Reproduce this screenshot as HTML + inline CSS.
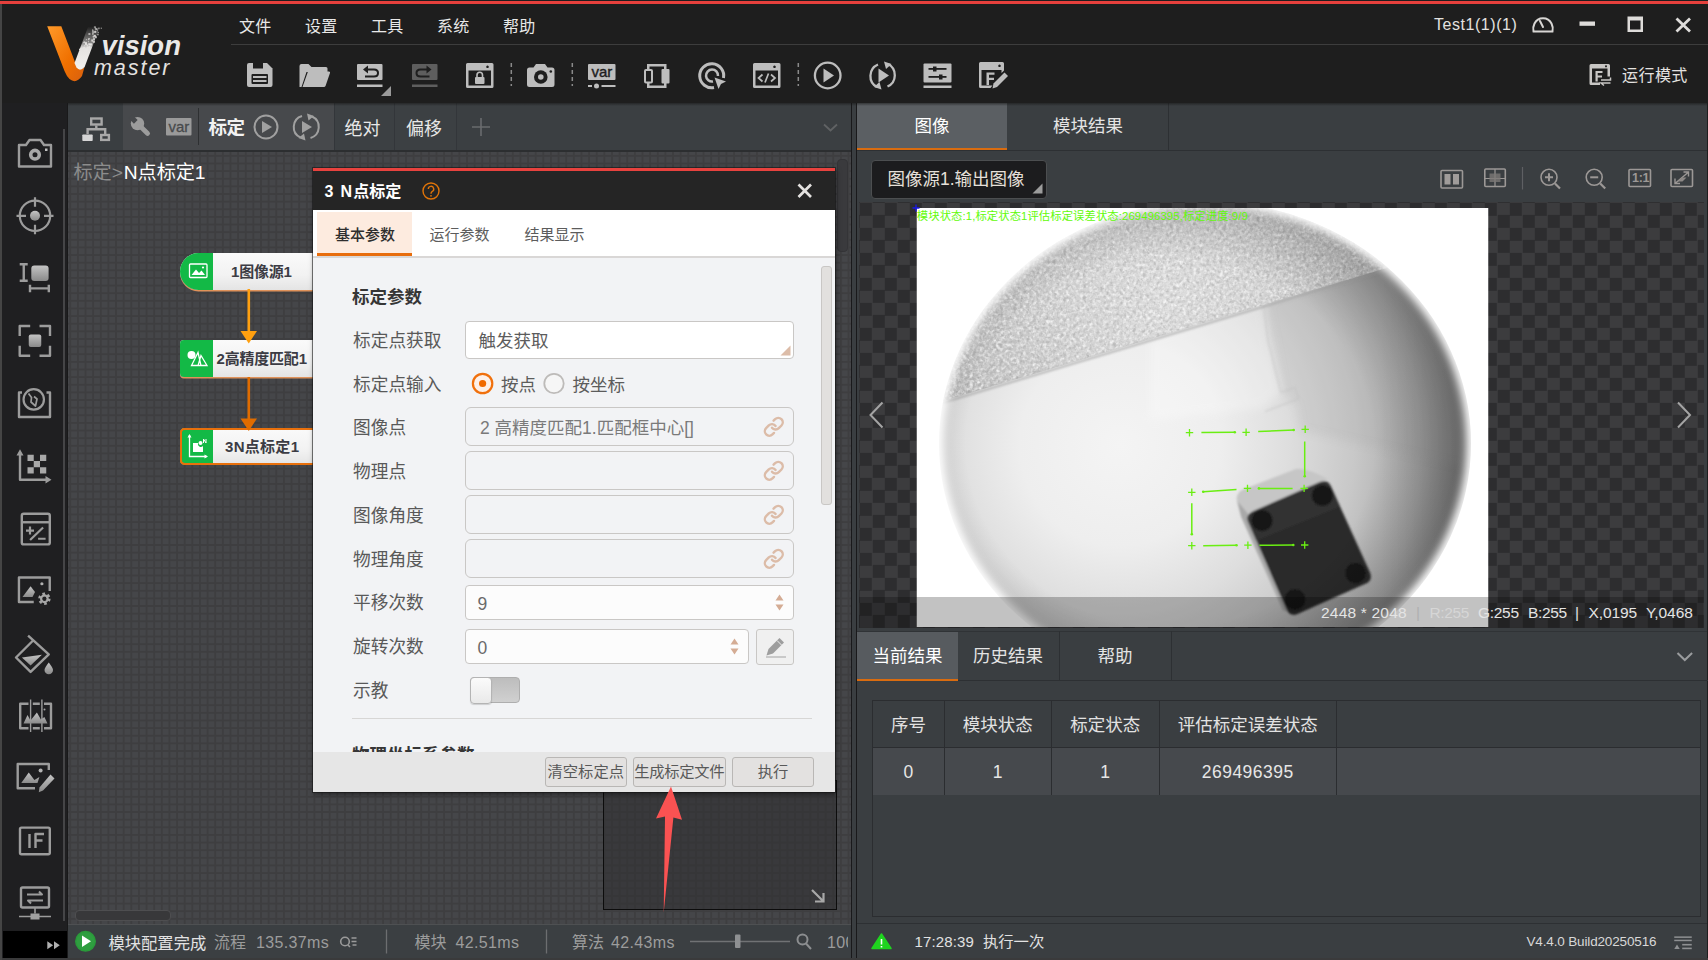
<!DOCTYPE html>
<html lang="zh-CN">
<head>
<meta charset="utf-8">
<title>VisionMaster</title>
<style>
*{box-sizing:border-box;margin:0;padding:0}
html,body{width:1708px;height:960px;overflow:hidden;background:#1e1e1e}
body{font-family:"Liberation Sans","Noto Sans CJK SC",sans-serif;color:#e6e6e6;position:relative;font-size:16px}
.abs{position:absolute}
.t{position:absolute;white-space:nowrap;line-height:1}
svg{position:absolute;overflow:visible}
/* ===== header ===== */
#redline{left:0;top:1px;width:1708px;height:3px;background:#e6403c}
#leftedge{display:none}
#hdr{left:1px;top:4px;width:1707px;height:99px;background:#1e1e1e}
#hsep{left:231px;top:44px;width:1477px;height:1px;background:#3d3d3d}
.menu{top:19.200px;font-size:16px;color:#e8e8e8;letter-spacing:.3px}
/* ===== sidebar ===== */
#side{left:1px;top:103px;width:66px;height:857px;background:#1f1f21}
#sidescroll{left:62.700px;top:128.500px;width:2.800px;height:792px;background:#454547}
#sidebtm{left:3px;top:931px;width:64.500px;height:27.500px;background:#000}
#vsplit1{left:67px;top:103px;width:2px;height:857px;background:#19191a}
/* ===== flow panel ===== */
#flowtabs{left:68px;top:103px;width:783px;height:47px;background:#3b3f42}
#flowtabline{left:68px;top:150px;width:783px;height:2px;background:#2c2e30}
#canvas{left:68px;top:152px;width:783px;height:772px;background:#3e3e40;overflow:hidden}
#fstatus{left:68px;top:924px;width:783px;height:35px;background:#3b3f42}
#vsplit2{left:851px;top:103px;width:6px;height:857px;background:#3a3e41;border-left:1.300px solid #19191b;border-right:1.300px solid #19191b}
/* ===== right panel ===== */
#rp{left:857px;top:103px;width:850px;height:857px;background:#3a3e41}
</style>
</head>
<body>
<div class="abs" id="hdr"></div>
<div class="abs" id="redline"></div>
<div class="abs" id="leftedge"></div>
<div class="abs" id="hsep"></div>
<div class="t menu" style="left:239px">文件</div>
<div class="t menu" style="left:305px">设置</div>
<div class="t menu" style="left:371px">工具</div>
<div class="t menu" style="left:437px">系统</div>
<div class="t menu" style="left:503px">帮助</div>
<!-- logo -->
<svg style="left:0;top:0" width="240" height="103" viewBox="0 0 240 103">
<defs>
<linearGradient id="lgo" x1="0" y1="0" x2="1" y2="1"><stop offset="0" stop-color="#ff9a2a"/><stop offset=".6" stop-color="#f07000"/><stop offset="1" stop-color="#d86010"/></linearGradient>
<linearGradient id="lgw" x1="0" y1="1" x2="0" y2="0"><stop offset="0" stop-color="#f4f2f0"/><stop offset=".5" stop-color="#e4e2e0"/><stop offset=".62" stop-color="#e0dedc" stop-opacity=".55"/><stop offset="1" stop-color="#e0dedc" stop-opacity="0"/></linearGradient>
</defs>
<path d="M47.2 26.3 L61.3 26.3 L76.5 66 Q79.5 72 84.5 67 L82 76 Q76 84.5 69.5 79 Q66.5 76 64.5 71 Z" fill="url(#lgo)"/>
<path d="M74.5 63 L88 27 L100 26.5 L84.6 67 Q80 72 76.5 67.5 Z" fill="url(#lgw)"/>
<g fill="#e8e6e4"><rect x="93.3" y="36.6" width="1.0" height="1.0" opacity="0.67"/><rect x="97.0" y="30.3" width="1.0" height="1.0" opacity="0.57"/><rect x="92.0" y="29.3" width="1.3" height="1.3" opacity="0.54"/><rect x="83.8" y="41.4" width="1.3" height="1.3" opacity="0.78"/><rect x="85.0" y="41.9" width="2.0" height="2.0" opacity="0.77"/><rect x="86.6" y="46.4" width="2.0" height="2.0" opacity="0.88"/><rect x="79.0" y="48.7" width="1.3" height="1.3" opacity="0.89"/><rect x="97.6" y="31.8" width="1.3" height="1.3" opacity="0.60"/><rect x="90.1" y="44.1" width="1.3" height="1.3" opacity="0.82"/><rect x="88.5" y="46.0" width="2.0" height="2.0" opacity="0.87"/><rect x="84.9" y="43.2" width="1.3" height="1.3" opacity="0.82"/><rect x="84.1" y="45.3" width="1.0" height="1.0" opacity="0.83"/><rect x="92.6" y="35.8" width="1.6" height="1.6" opacity="0.68"/><rect x="94.0" y="31.0" width="2.0" height="2.0" opacity="0.58"/><rect x="85.9" y="39.2" width="1.0" height="1.0" opacity="0.74"/><rect x="94.9" y="28.0" width="2.0" height="2.0" opacity="0.52"/><rect x="87.9" y="41.2" width="1.0" height="1.0" opacity="0.79"/><rect x="93.6" y="34.9" width="1.0" height="1.0" opacity="0.63"/><rect x="97.1" y="33.7" width="1.6" height="1.6" opacity="0.61"/><rect x="93.0" y="38.2" width="2.0" height="2.0" opacity="0.72"/><rect x="85.4" y="49.0" width="1.6" height="1.6" opacity="0.90"/><rect x="86.1" y="49.3" width="1.6" height="1.6" opacity="0.93"/><rect x="88.2" y="38.0" width="1.6" height="1.6" opacity="0.72"/><rect x="96.2" y="28.4" width="1.6" height="1.6" opacity="0.53"/><rect x="88.9" y="43.9" width="1.6" height="1.6" opacity="0.81"/><rect x="93.9" y="26.2" width="2.0" height="2.0" opacity="0.50"/><rect x="84.2" y="49.9" width="1.6" height="1.6" opacity="0.94"/><rect x="87.9" y="39.2" width="1.0" height="1.0" opacity="0.74"/><rect x="92.4" y="31.2" width="1.3" height="1.3" opacity="0.59"/><rect x="93.9" y="35.1" width="2.0" height="2.0" opacity="0.67"/><rect x="83.3" y="41.9" width="1.3" height="1.3" opacity="0.78"/><rect x="93.0" y="40.8" width="2.0" height="2.0" opacity="0.75"/><rect x="98.1" y="27.6" width="1.6" height="1.6" opacity="0.52"/><rect x="85.1" y="43.3" width="2.0" height="2.0" opacity="0.82"/><rect x="94.5" y="30.6" width="2.0" height="2.0" opacity="0.58"/><rect x="92.1" y="30.2" width="1.6" height="1.6" opacity="0.56"/><rect x="85.1" y="49.2" width="1.0" height="1.0" opacity="0.92"/><rect x="92.0" y="33.2" width="1.6" height="1.6" opacity="0.61"/><rect x="92.3" y="31.9" width="1.6" height="1.6" opacity="0.57"/><rect x="94.9" y="27.4" width="1.0" height="1.0" opacity="0.52"/><rect x="91.3" y="39.3" width="1.6" height="1.6" opacity="0.74"/><rect x="91.5" y="40.2" width="1.6" height="1.6" opacity="0.74"/><rect x="88.2" y="43.1" width="2.0" height="2.0" opacity="0.79"/><rect x="90.0" y="43.3" width="2.0" height="2.0" opacity="0.79"/><rect x="100.7" y="27.6" width="1.3" height="1.3" opacity="0.51"/><rect x="83.3" y="46.9" width="1.6" height="1.6" opacity="0.86"/><rect x="94.2" y="34.9" width="1.3" height="1.3" opacity="0.64"/><rect x="95.0" y="36.2" width="2.0" height="2.0" opacity="0.67"/><rect x="86.7" y="44.5" width="1.6" height="1.6" opacity="0.81"/><rect x="88.4" y="33.0" width="2.0" height="2.0" opacity="0.63"/></g>
<text x="101.5" y="55" font-family="'Liberation Sans',sans-serif" font-weight="700" font-style="italic" font-size="27.5" fill="#ebe9e7">vision</text>
<text x="94" y="75" font-family="'Liberation Sans',sans-serif" font-style="italic" font-size="21.5" letter-spacing="1.95" fill="#e4e2e0">master</text>
</svg>
<!-- toolbar icons -->
<svg style="left:0;top:0" width="1708" height="103" viewBox="0 0 1708 103" fill="#bdbdbd">
<!-- save -->
<path d="M247 65 q0-2 2-2 h18 l5.5 5.5 v16.5 q0 2-2 2 h-21.500 q-2 0-2-2z" />
<rect x="253" y="63" width="10" height="5.500" fill="#1e1e1e"/><rect x="251.500" y="74" width="16.500" height="10" rx="1" fill="#1e1e1e"/>
<rect x="253" y="76" width="13.500" height="2" /><rect x="253" y="80" width="13.500" height="2"/>
<!-- open -->
<path d="M299.500 87 v-21 q0-2 2-2 h7 l3 3 h14.500 q1.500 0 1.500 1.500 v3.500 h-21 l-5 15z"/>
<path d="M308 71.500 h21 q1.500 0 1 1.500 l-4.500 13 q-.5 1-1.500 1 h-21.500z"/>
<!-- undo -->
<rect x="357" y="64" width="25.500" height="16" rx="1"/>
<path d="M363 69.500 l5-4 v3 h6 q5 0 5 4.500 t-5 4.500 h-9 v-2 h9 q3 0 3-2.500 t-3-2.500 h-6 v3z" fill="#1e1e1e"/>
<rect x="357" y="84.500" width="25.500" height="2.500"/>
<path d="M391 86 v10 h-10z" fill="#9a9a9a"/>
<!-- redo -->
<g fill="#5e5e5e"><rect x="412" y="64" width="25.500" height="16" rx="1"/><rect x="412" y="84.500" width="25.500" height="2.500"/></g>
<path d="M431.500 69.500 l-5-4 v3 h-6 q-5 0-5 4.500 t5 4.500 h9 v-2 h-9 q-3 0-3-2.500 t3-2.500 h6 v3z" fill="#1e1e1e"/>
<!-- lock window -->
<path d="M466 64.500 q0-1.500 1.500-1.500 h24.500 q1.500 0 1.500 1.500 v22 q0 1.500-1.500 1.500 h-24.500 q-1.500 0-1.500-1.500z M468.500 70.500 v15 h22.500 v-15z M487.500 65.500 a1.300 1.300 0 1 0 .01 0z" fill-rule="evenodd"/>
<rect x="475" y="77" width="9.500" height="7" rx="1"/><path d="M477 77 v-2 a2.750 2.750 0 0 1 5.500 0 v2" fill="none" stroke="#bdbdbd" stroke-width="1.600"/>
<!-- dashes -->
<g stroke="#8a8a8a" stroke-width="1.500" stroke-dasharray="4 3" fill="none"><path d="M511.300 63 v23"/><path d="M572.300 63 v23"/><path d="M798.300 63 v23"/></g>
<!-- camera -->
<path d="M527 70 q0-2.500 2.500-2.500 h4 l2.500-3.500 h9 l2.500 3.500 h4.500 q2.500 0 2.500 2.500 v14.500 q0 2.500-2.500 2.500 h-22.500 q-2.500 0-2.500-2.500z"/>
<circle cx="540.800" cy="77" r="6.800" fill="#1e1e1e"/><circle cx="540.800" cy="77" r="2.800"/><circle cx="550.800" cy="71.500" r="1.300" fill="#1e1e1e"/>
<!-- var -->
<rect x="588" y="64" width="27.500" height="16" rx="1"/>
<text x="601.800" y="77" text-anchor="middle" font-family="'Liberation Sans',sans-serif" font-size="15" fill="#1e1e1e" stroke="#1e1e1e" stroke-width=".4">var</text>
<rect x="588" y="85" width="4" height="2"/><circle cx="596.500" cy="86" r="2.500"/><rect x="601.500" y="85" width="14" height="2"/>
<!-- module -->
<path d="M647 64 h19.500 v2.500 h-19.500z M647 85.500 h19.500 v2.500 h-19.500z M647 64 h2.500 v6 h-2.500z M664 64 h2.500 v6 h-2.500z M647 82 h2.500 v6 h-2.500z M664 82 h2.500 v6 h-2.500z"/>
<rect x="645" y="70" width="7" height="12.500" rx="1" fill="none" stroke="#bdbdbd" stroke-width="2"/><rect x="661.500" y="69" width="8" height="14.500" rx="1"/>
<!-- target click -->
<path d="M723.500 78 A12 12 0 1 0 714 87.500" fill="none" stroke="#bdbdbd" stroke-width="3"/>
<path d="M718 76 A6 6 0 1 0 713 81.500" fill="none" stroke="#bdbdbd" stroke-width="2.500"/>
<path d="M714.500 77.500 l11.500 4 l-5 2.500 l-2.500 5z"/>
<!-- code window -->
<path d="M753 64.500 q0-1.500 1.500-1.500 h24.500 q1.500 0 1.500 1.500 v22 q0 1.500-1.500 1.500 h-24.500 q-1.500 0-1.500-1.500z M755.500 70.500 v15 h22.500 v-15z M774.500 65.500 a1.300 1.300 0 1 0 .01 0z" fill-rule="evenodd"/>
<path d="M762.500 74.500 l-4 3.500 l4 3.500 M771 74.500 l4 3.500 l-4 3.500 M768.500 73.500 l-3.500 9" fill="none" stroke="#bdbdbd" stroke-width="1.700"/>
<!-- play -->
<circle cx="827.700" cy="75.500" r="12.800" fill="none" stroke="#bdbdbd" stroke-width="2.300"/><path d="M823.500 68.500 l10.500 7 l-10.500 7z"/>
<!-- loop play -->
<path d="M878 64.500 A12.500 12.500 0 0 0 877 87" fill="none" stroke="#bdbdbd" stroke-width="2.300"/>
<path d="M887.500 86.500 A12.500 12.500 0 0 0 888 64" fill="none" stroke="#bdbdbd" stroke-width="2.300"/>
<path d="M884 61.500 l7.500 2.500 l-5.500 5z M881.500 89.500 l-7.500-2.500 l5.500-5z"/>
<path d="M878.500 68.500 l10.500 7 l-10.500 7z"/>
<!-- sliders -->
<rect x="923.500" y="63.500" width="28" height="19" rx="1"/><rect x="923.500" y="85.500" width="28" height="2.500"/>
<g fill="#1e1e1e"><rect x="928.500" y="68" width="18" height="1.800"/><rect x="928.500" y="76" width="18" height="1.800"/><rect x="933" y="66.500" width="3.500" height="5"/><rect x="939" y="74.500" width="3.500" height="5"/></g>
<!-- F edit -->
<path d="M979 63.500 q0-1.500 1.500-1.500 h22 q1.500 0 1.500 1.500 v7 l-2.500 2.500 v-3 h-20 v15.500 h11 l-2 2.500 h-10 q-1.500 0-1.500-1.500z M999.500 64.500 a1.300 1.300 0 1 0 .01 0z" fill-rule="evenodd"/>
<path d="M986.500 72.500 h8 v2.200 h-5.500 v3 h5 v2.200 h-5 v5 h-2.500z"/>
<path d="M1004.500 72.500 l3.500 3.500 l-11 11 l-4.500 1.500 l1-5z"/>
<!-- window controls -->
<g fill="none" stroke="#d8d6d4" stroke-width="2">
<path d="M1533.500 31.500 h19 q1-4-1-8 a9.500 9.500 0 0 0 -17 0 q-2 4-1 8z"/><path d="M1543 27 l-3-6" stroke-linecap="round"/>
</g>
<rect x="1579.500" y="21.500" width="15.500" height="4.300" fill="#dedcda"/>
<path d="M1627.500 16.500 h15.500 v15.500 h-15.500z M1630 20.500 v9 h10.500 v-9z" fill="#dedcda" fill-rule="evenodd"/>
<path d="M1676.500 18.500 l13.500 13 M1690 18.500 l-13.500 13" stroke="#dedcda" stroke-width="2.800" fill="none"/>
<!-- run mode icon -->
<path d="M1589.500 65.500 q0-1.500 1.500-1.500 h17.500 q1.500 0 1.500 1.500 v11 h-2.500 v-8 h-15.500 v14 h8 v2.500 h-9 q-1.500 0-1.500-1.500z M1606 65.300 a1 1 0 1 0 .01 0z" fill="#c8c6c4" fill-rule="evenodd"/>
<path d="M1595.500 71 h7 v2 h-4.800 v2.500 h4.300 v2 h-4.300 v4 h-2.200z" fill="#c8c6c4"/>
<path d="M1601 80 h9.500 v-2.500 M1610.500 83 h-9.500 l3 2.500" fill="none" stroke="#c8c6c4" stroke-width="1.500"/>
</svg>
<div class="t" style="left:1434px;top:17px;font-size:16px;color:#e4e2e0;letter-spacing:.55px">Test1(1)(1)</div>
<div class="t" style="left:1622px;top:67.500px;font-size:16px;color:#e4e2e0;letter-spacing:.45px">运行模式</div>
<!--HEADER-ICONS-END-->
<div class="abs" id="side"></div>
<div class="abs" id="sidescroll"></div>
<div class="abs" id="sidebtm"></div>
<div class="abs" id="vsplit1"></div>
<svg style="left:0;top:103px" width="68" height="857" viewBox="0 103 68 857" fill="none" stroke="#9c9c9c" stroke-width="2.400" stroke-linejoin="round">
<defs><linearGradient id="sg" x1="0" y1="0" x2="0" y2="1"><stop offset="0" stop-color="#c4c4c4"/><stop offset="1" stop-color="#8a8a8a"/></linearGradient></defs>
<!-- camera -->
<path d="M19 145 h7 l3.500-5 h11 l3.500 5 h7 v21.500 h-32z"/><circle cx="35" cy="154.700" r="4.300" stroke-width="3.600" stroke="#a8a8a8"/><rect x="45" y="148.500" width="2.500" height="2.500" fill="#c0c0c0" stroke="none"/>
<!-- target -->
<circle cx="35" cy="215.800" r="15.200" stroke-width="2.200"/><circle cx="35" cy="215.800" r="5" fill="url(#sg)" stroke="none"/><path d="M35 197.300 v9.500 M35 224.800 v9.500 M16.500 215.800 h9.500 M44 215.800 h9.500" stroke-width="2.200"/>
<!-- measure -->
<rect x="31.300" y="265.500" width="17.300" height="15.500" rx="3" fill="url(#sg)" stroke="none"/><path d="M23.750 264 v17 M19.700 264.300 h8 M19.700 280.800 h8 M30 288.400 h19 M30 284.700 v7.500 M48.800 284.700 v7.500"/>
<!-- focus -->
<path d="M19.700 336 v-10 h10.500 M39.500 326 h10.500 v10 M50 345.700 v10 h-10.500 M30.200 355.700 h-10.500 v-10"/><rect x="28.750" y="334.400" width="12.500" height="12.500" rx="2" fill="url(#sg)" stroke="none"/>
<!-- globe photo -->
<path d="M22 392.500 h-3 v24.500 h31 v-24.500 h-3.500"/><circle cx="33.750" cy="399.400" r="10.200" stroke-width="2.200"/><path d="M28.500 393.500 l3 4 l-.5 4.500 l4.500 4 l1.500-7 l-3-2.500" stroke-width="1.700"/>
<!-- axes -->
<path d="M20 454 v25.750 h27" /><path d="M16.500 455.500 l3.500-6.200 l3.500 6.200z M45.500 476 l6 3.750 l-6 3.750z" fill="#9c9c9c" stroke="none"/>
<g fill="#a8a8a8" stroke="none"><rect x="27.500" y="454.750" width="6.250" height="6.250"/><rect x="40" y="454.750" width="6.250" height="6.250"/><rect x="33.750" y="461" width="6.250" height="6.250"/><rect x="27.500" y="467.250" width="6.250" height="6.250"/><rect x="40" y="467.250" width="6.250" height="6.250"/></g>
<!-- calc -->
<rect x="21.800" y="513.700" width="28" height="30.700" rx="2"/><path d="M21.800 522.250 h28"/><path d="M26 530.600 h8 M30 526.600 v8 M38.100 538.750 h7.500 M43.100 527.500 l-13 12.500" stroke-width="2.200"/>
<!-- image gear -->
<path d="M33.750 602 h-14.800 v-24.500 h30.800 v13.500"/><path d="M22.500 597 l8.100-10.750 l4.400 5.650 l-2.500 5.100z" fill="url(#sg)" stroke="none"/><circle cx="41.900" cy="583.750" r="1.600" fill="#b0b0b0" stroke="none"/>
<circle cx="44.400" cy="598.750" r="4.300" stroke-width="3.800" stroke-dasharray="2.250 2.250" stroke="#a6a6a6"/><circle cx="44.400" cy="598.750" r="3.300" stroke-width="2.200" stroke="#a6a6a6"/>
<!-- bucket -->
<path d="M28.100 635.600 L48.750 654.400 L30.600 671.900 L16 657.500 L33.100 640.500"/><path d="M21.900 657.500 l20-2.750 l-11.300 10.850z" fill="url(#sg)" stroke="none"/><path d="M48.750 662.500 q4.250 5.500 4.250 7.500 a4.250 4.250 0 0 1-8.500 0 q0-2 4.250-7.500z" fill="url(#sg)" stroke="none"/>
<!-- compare -->
<path d="M28.500 703.700 h-8.300 v24.500 h8.300 M32.800 703.700 h7 M32.800 728.200 h7 M44 703.700 h7 v24.500 h-7"/><path d="M30.600 699.400 v32.500 M41.900 699.400 v32.500" stroke-width="1.400"/><path d="M23.500 723.500 l4-8.500 l3 5.500 l6.400-8 l4 7 l3.500-2.600 l3.100 6.600z" fill="url(#sg)" stroke="none"/><circle cx="44.500" cy="709.500" r="1" fill="#a6a6a6" stroke="none"/>
<!-- image edit -->
<path d="M35 788.200 h-17.300 v-24.200 h31.100 v6"/><path d="M21.250 783.100 l7.500-10.600 l5.650 7.500 l5-3.100 l-1.900 6.200z" fill="url(#sg)" stroke="none"/><circle cx="40.600" cy="770.400" r="2" fill="#b4b4b4" stroke="none"/>
<path d="M50.500 774.500 l4 4 l-11.500 12 l-4.200 1.800 l.7-4.800z" fill="url(#sg)" stroke="none"/>
<!-- IF -->
<rect x="20" y="827.600" width="29.800" height="26.600" rx="1.500"/><path d="M29.500 834 v14 M35.500 848 v-14 h8.500 M35.500 840.500 h7" stroke-width="2.400"/>
<!-- protocol -->
<rect x="21" y="887.500" width="28" height="20" rx="1.500"/><path d="M27 894.500 h15 l-3-3 M43 900.500 h-15 l3 3" stroke-width="2"/><path d="M35 907.500 v6 M19 916.500 h32" stroke-width="1.600"/><rect x="30.500" y="913.500" width="9" height="6" fill="#a0a0a0" stroke="none"/>
<!-- >> -->
<path d="M47.300 941.200 l5.800 4 l-5.800 4z M54 941.200 l5.800 4 l-5.800 4z" fill="#b0b0b0" stroke="none"/>
</svg>
<!--SIDE-ICONS-END-->
<div class="abs" id="flowtabs"></div>
<div class="abs" id="flowtabline"></div>
<div class="abs" id="canvas"><svg style="left:0;top:0" width="783" height="772"><defs><pattern id="grid" x="3.200" y="4.800" width="7.630" height="7.630" patternUnits="userSpaceOnUse"><rect x="0" y="0" width="5.700" height="5.700" fill="#454649"/></pattern></defs><rect width="783" height="772" fill="url(#grid)"/></svg></div>
<div class="abs" id="fstatus"></div>
<style>
.ftab{position:absolute;top:103px;height:47px}
.node{position:absolute;left:180px;width:140px;height:37px;background:linear-gradient(#fafafa,#f2f2f2 60%,#e4e4e4);box-shadow:0 1.500px 0 #e0925a}
.node .g{position:absolute;left:0;top:0;width:32.500px;height:37px;background:#13b946}
.node .nt{position:absolute;top:11px;font-size:15px;font-weight:700;color:#3c3c44;white-space:nowrap;line-height:1;letter-spacing:-.2px}
.st{position:absolute;top:934.500px;font-size:16px;line-height:1;white-space:nowrap;color:#9c9c9c}
</style>
<div class="ftab" style="left:68px;width:55px;background:#3a3e41"></div>
<div class="ftab" style="left:123px;width:211px;background:#47494c"></div>
<div class="ftab" style="left:334px;width:61px;background:#3c4043;border-left:1px solid #33363a;border-right:1px solid #33363a"></div>
<div class="ftab" style="left:395px;width:62px;background:#3c4043;border-right:1px solid #33363a"></div>
<div class="abs" style="left:198px;top:108px;width:1px;height:37px;background:#2e3032"></div>
<svg style="left:68px;top:103px" width="783" height="47" viewBox="68 103 783 47">
<!-- tree -->
<g fill="none" stroke="#a8a8a8" stroke-width="2.400"><rect x="91.200" y="118.500" width="10.400" height="6"/><path d="M96.300 125.500 v3.700 M87.600 134 v-4.800 h17.600 v4.800"/><rect x="101.200" y="135" width="7.700" height="4.900"/></g><rect x="82.300" y="134.500" width="10.400" height="6.600" rx=".8" fill="#d6d6d6"/>
<!-- wrench -->
<circle cx="137.500" cy="123.600" r="6.700" fill="#9c9c9c"/><path d="M139.500 125.600 L147.600 133.400" stroke="#9c9c9c" stroke-width="4.800" stroke-linecap="round"/><rect x="-2.600" y="-9" width="5.200" height="8" fill="#47494c" transform="translate(136.500 122.600) rotate(-45)"/>
<!-- var -->
<rect x="166" y="118" width="25.500" height="17.500" rx="1" fill="#9a9a9a"/><text x="178.800" y="132" text-anchor="middle" font-family="'Liberation Sans',sans-serif" font-size="15" fill="#484a4c" stroke="#484a4c" stroke-width=".3">var</text>
<!-- play -->
<g fill="none" stroke="#a0a0a0" stroke-width="2"><circle cx="266" cy="127" r="11.500"/></g><path d="M262 121 l10 6 l-10 6z" fill="#a0a0a0"/>
<!-- loop -->
<g fill="none" stroke="#a0a0a0" stroke-width="2"><path d="M302 116 A11.500 11.500 0 0 0 300.500 137.500"/><path d="M310.500 138 A11.500 11.500 0 0 0 312 116.500"/></g>
<path d="M307 113.500 l7 2.500 l-5.500 4.500z M305.500 140.500 l-7-2.500 l5.500-4.500z M302 121 l10 6 l-10 6z" fill="#a0a0a0"/>
<!-- plus -->
<path d="M472 127 h18 M481 118 v18" stroke="#6a6c6e" stroke-width="1.600"/>
<!-- chevron -->
<path d="M824 124.500 l6.500 6 l6.500-6" fill="none" stroke="#606264" stroke-width="1.800"/>
</svg>
<div class="t" style="left:208.500px;top:119px;font-size:18.500px;font-weight:700;color:#f2f2f2;letter-spacing:-.5px">标定</div>
<div class="t" style="left:344.500px;top:119.500px;font-size:18px;color:#e8e8e8">绝对</div>
<div class="t" style="left:406px;top:119.500px;font-size:18px;color:#e8e8e8">偏移</div>
<div class="t" style="left:73.500px;top:162.500px;font-size:19.200px;color:#8c8c8c;letter-spacing:-.1px">标定&gt;<span style="color:#fff;margin-left:1px">N点标定1</span></div>
<!-- minimap -->
<div class="abs" style="left:603px;top:780px;width:234px;height:130px;background:rgba(48,48,50,.55);border:1px solid #0c0c0c"></div>
<svg style="left:810px;top:888px" width="16" height="16" viewBox="0 0 16 16"><path d="M2 2 l11 11 M5 13.500 h8.500 v-8.500" fill="none" stroke="#a8a8a8" stroke-width="2.200"/></svg>
<div class="abs" style="left:836.500px;top:158.500px;width:11px;height:93px;border:1px solid #343437;border-radius:4px;background:#3a3a3d"></div>
<!-- scrollbar h -->
<div class="abs" style="left:74.500px;top:909.500px;width:96px;height:11.500px;border:1px solid #4e4e50;border-radius:4px;background:#38383a"></div>
<!-- nodes -->
<div class="node" style="top:252.500px;border-radius:18.500px 0 0 18.500px"><div class="g" style="border-radius:18.500px 0 0 18.500px"></div><div class="nt" style="left:51px">1图像源1</div></div>
<div class="node" style="top:340px;border-radius:4px 0 0 4px"><div class="g" style="border-radius:4px 0 0 4px"></div><div class="nt" style="left:36.500px">2高精度匹配1</div></div>
<div class="node" style="top:427.500px;border-radius:5px 0 0 5px;box-shadow:inset 2px 0 0 #e8700c,inset 0 2px 0 #e8700c,inset 0 -2px 0 #e8700c;"><div class="g" style="border-radius:5px 0 0 5px;box-shadow:inset 2px 0 0 #e8700c,inset 0 2px 0 #e8700c,inset 0 -2px 0 #e8700c"></div><div class="nt" style="left:45px;letter-spacing:.3px">3N点标定1</div></div>
<svg style="left:180px;top:250px" width="34" height="216" viewBox="180 250 34 216" fill="none" stroke="#fff" stroke-width="1.300">
<rect x="189.500" y="264" width="17.500" height="13.500" rx="1"/><path d="M191.500 275 l4.500-5.500 l3 3.500 l2.500-2.500 l3.500 4.500z" fill="#fff" stroke="none"/><circle cx="203" cy="267.500" r="1.100" fill="#fff" stroke="none"/>
<circle cx="191.500" cy="355" r="4" fill="#fff" stroke="none"/><path d="M198 352.500 l-6.500 13 h9.500z M201 355.500 l-3 10 h9z"/>
<path d="M189.500 435 v21.500 h17" /><path d="M187.500 437.500 l2-3.500 l2 3.500z M204.500 454.500 l3.500 2 l-3.500 2z" fill="#fff" stroke="none"/><path d="M193 443 h5 a3 3 0 0 0 5 3 v6 h-10z" fill="#fff" stroke="none"/><circle cx="200.500" cy="443" r="2" fill="#fff" stroke="none"/><path d="M203.500 439 v4 M203.500 439 l2.500 4 v-4" stroke-width="1"/>
</svg>
<!-- arrows between nodes -->
<svg style="left:230px;top:285px" width="40" height="150" viewBox="230 285 40 150">
<path d="M248.800 289 v44" stroke="#ffa010" stroke-width="2.600"/><path d="M240.500 331 h16.500 l-8.250 12.500z" fill="#ffa010"/>
<path d="M248.800 377 v44" stroke="#e06c00" stroke-width="2.600"/><path d="M240.500 418.500 h16.500 l-8.250 12.500z" fill="#e06c00"/>
</svg>
<!-- status bar -->
<div class="abs" style="left:68px;top:923.500px;width:783px;height:1px;background:#4e5052"></div>
<svg style="left:68px;top:924px" width="783" height="35" viewBox="68 924 783 35">
<circle cx="85.500" cy="941.300" r="10.500" fill="#2a9a3a"/><circle cx="85.500" cy="941.300" r="9" fill="#2f9e40"/><path d="M82 935.500 l9 5.800 l-9 5.800z" fill="#fff"/>
<g fill="none" stroke="#9a9a9a" stroke-width="1.600"><circle cx="345" cy="941.500" r="4.300"/><path d="M348 945 l2 2 M351.500 938 h5 M351.500 941.500 h5 M352.500 945 h4"/></g>
<path d="M386.500 929.500 v24 M546.500 929.500 v24" stroke="#6c6e70" stroke-width="1.300"/>
<path d="M690 941.500 h100" stroke="#707274" stroke-width="1.300"/><rect x="735" y="934.500" width="5.500" height="13.500" rx="1" fill="#8e9092"/>
<g fill="none" stroke="#8c8e90" stroke-width="2"><circle cx="802.500" cy="939.500" r="5"/><path d="M806 943.500 l5 5.500"/></g>
</svg>
<div class="st" style="left:108.500px;color:#e2e2e2;font-size:16.300px">模块配置完成</div>
<div class="st" style="left:214px">流程</div>
<div class="st" style="left:256px;letter-spacing:.35px">135.37ms</div>
<div class="st" style="left:414.500px">模块</div>
<div class="st" style="left:455.500px;letter-spacing:.35px">42.51ms</div>
<div class="st" style="left:572px">算法</div>
<div class="st" style="left:611px;letter-spacing:.35px">42.43ms</div>
<div class="st" style="left:827px;width:21px;overflow:hidden;letter-spacing:.35px">100%</div>
<!--FLOW-END-->
<div class="abs" id="vsplit2"></div>
<div class="abs" id="rp"></div>
<style>
.rtab{position:absolute;height:47px;top:103px}
.rt{position:absolute;white-space:nowrap;line-height:1;font-size:17.500px}
.th{position:absolute;top:717px;font-size:17.500px;line-height:1;color:#e2e2e2;white-space:nowrap;text-align:center}
.td{position:absolute;top:763.500px;font-size:17.500px;line-height:1;color:#e6e6e6;white-space:nowrap;text-align:center;letter-spacing:.5px}
.inf{position:absolute;top:605px;font-size:15.500px;line-height:1;color:#e4e4e4;white-space:nowrap;letter-spacing:.2px}
</style>
<!-- top tabs -->
<div class="rtab" style="left:857px;width:149.500px;background:#5b5f63"></div>
<div class="abs" style="left:857px;top:148px;width:149.500px;height:2px;background:#d96c10"></div>
<div class="abs" style="left:857px;top:150px;width:850px;height:1px;background:#2d3033"></div>
<div class="abs" style="left:1168px;top:103px;width:1px;height:47px;background:#2d3033"></div>
<div class="rt" style="left:914.500px;top:118px;color:#fff">图像</div>
<div class="rt" style="left:1053px;top:118px;color:#e4e4e4">模块结果</div>
<!-- dropdown -->
<div class="abs" style="left:870.500px;top:159.500px;width:176.500px;height:39px;background:#1c1c1e;border:1px solid #4c4e50;border-radius:4px"></div>
<div class="rt" style="left:887.500px;top:170.800px;color:#e6e0da">图像源1.输出图像</div>
<svg style="left:1032px;top:183px" width="11" height="11"><path d="M10.500 .5 v10 h-10z" fill="#9c9c9c"/></svg>
<!-- image toolbar icons -->
<svg style="left:1430px;top:160px" width="270" height="36" viewBox="1430 160 270 36" fill="none" stroke="#9c9896" stroke-width="1.600">
<rect x="1441" y="170.500" width="21.500" height="17.500" rx="1"/><rect x="1444.500" y="174" width="6" height="10.500" fill="#a09c9a" stroke="none"/><rect x="1453" y="174" width="6" height="10.500" fill="#a09c9a" stroke="none"/>
<rect x="1484.800" y="169" width="20.500" height="17.500" rx="1"/><path d="M1495 169 v17.500 M1484.800 178.500 h20.500" stroke-width="1.200"/><rect x="1489.500" y="173.500" width="11" height="8.500" fill="#7c7876" stroke="none" opacity=".8"/>
<path d="M1522.500 167 v22.500" stroke="#5e6063" stroke-width="1.200"/>
<circle cx="1549" cy="177.300" r="8"/><path d="M1555 183.500 l5 5" stroke-width="2.200"/><path d="M1545 177.300 h8 M1549 173.300 v8" stroke-width="2"/>
<circle cx="1594.200" cy="177.300" r="8"/><path d="M1600.200 183.500 l5 5" stroke-width="2.200"/><path d="M1590.200 177.300 h8" stroke-width="2"/>
<rect x="1629" y="169.500" width="21.500" height="17" rx="1"/>
<rect x="1671" y="169.500" width="21.500" height="17" rx="1"/><path d="M1675 183.500 l13-11 M1683.500 172 h5 v4.500 M1675 178.500 v5 h5" stroke-width="1.400"/><path d="M1677.500 181.500 l4-4 h5 l-4 4z" fill="#8c8886" stroke="none"/>
</svg>
<div class="t" style="left:1632px;top:171.500px;font-size:12.500px;font-weight:700;color:#9c9896;letter-spacing:-.3px">1:1</div>
<!-- image view -->
<div class="abs" id="view" style="left:859px;top:201.500px;width:844.500px;height:426px;overflow:hidden;background-color:#2d2d2f;
background-image:conic-gradient(#3c3c3e 25%,transparent 0 50%,#3c3c3e 0 75%,transparent 0);background-size:25px 25px;background-position:.800px .900px"></div>
<svg style="left:859px;top:201.500px" width="844.500" height="426" viewBox="859 201.500 844.500 426">
<defs>
<clipPath id="imgclip"><rect x="916.500" y="207.500" width="572" height="419"/></clipPath>
<clipPath id="circ"><ellipse cx="1205" cy="443" rx="266" ry="242"/></clipPath>
<radialGradient id="sheet" gradientUnits="userSpaceOnUse" cx="1120" cy="445" r="335"><stop offset="0" stop-color="#f4f4f4"/><stop offset=".3" stop-color="#eeeeee"/><stop offset=".5" stop-color="#dedede"/><stop offset=".7" stop-color="#c8c8c8"/><stop offset=".9" stop-color="#a6a6a6"/><stop offset="1" stop-color="#8c8c8c"/></radialGradient>
<radialGradient id="foam" gradientUnits="userSpaceOnUse" cx="1170" cy="300" r="260"><stop offset="0" stop-color="#dcdcdc"/><stop offset=".4" stop-color="#d2d2d2"/><stop offset=".8" stop-color="#c2c2c2"/><stop offset="1" stop-color="#b6b6b6"/></radialGradient>
<linearGradient id="rdark" gradientUnits="userSpaceOnUse" x1="1380" y1="0" x2="1475" y2="0"><stop offset="0" stop-color="#000" stop-opacity="0"/><stop offset="1" stop-color="#000" stop-opacity=".08"/></linearGradient>
<radialGradient id="vig2" gradientUnits="userSpaceOnUse" cx="1170" cy="443" r="300" gradientTransform="translate(0 443) scale(1 .9) translate(0 -443)"><stop offset="0" stop-color="#000" stop-opacity="0"/><stop offset=".68" stop-color="#000" stop-opacity="0"/><stop offset="1" stop-color="#000" stop-opacity=".24"/></radialGradient>
<filter id="blur1" x="-5%" y="-5%" width="110%" height="110%"><feGaussianBlur stdDeviation="1.200"/></filter>
<filter id="blur4" x="-10%" y="-10%" width="120%" height="120%"><feGaussianBlur stdDeviation="4.500"/></filter>
<filter id="noise" x="0" y="0" width="100%" height="100%"><feTurbulence type="fractalNoise" baseFrequency=".3" numOctaves="2" seed="7" result="n"/><feColorMatrix in="n" type="matrix" values="0 0 0 0 1  0 0 0 0 1  0 0 0 0 1  1.400 1.400 1.400 0 -1.850"/><feComposite in2="SourceGraphic" operator="in"/></filter>
<filter id="noised" x="0" y="0" width="100%" height="100%"><feTurbulence type="fractalNoise" baseFrequency=".3" numOctaves="2" seed="21" result="n"/><feColorMatrix in="n" type="matrix" values="0 0 0 0 0  0 0 0 0 0  0 0 0 0 0  1.400 1.400 1.400 0 -1.900"/><feComposite in2="SourceGraphic" operator="in"/></filter>
</defs>
<g clip-path="url(#imgclip)">
<rect x="916.500" y="207.500" width="572" height="419" fill="#fff"/>
<g clip-path="url(#circ)">
<rect x="930" y="195" width="550" height="500" fill="url(#sheet)"/>
<rect x="930" y="195" width="550" height="500" fill="url(#rdark)"/>
<!-- right darker paper area -->
<path d="M1266 300 L1392 262 L1480 240 L1480 470 L1300 430 L1296 404 L1284 396 Z" fill="#9a9a9a" opacity=".16" filter="url(#blur4)"/>
<path d="M1150 336 L1263 301 L1269 340 L1282 392 L1262 408 L1150 420Z" fill="#fff" opacity=".28" filter="url(#blur4)"/>
<path d="M1263 300 l5 40 l13 52 l14 -5 l4 11 l-34 13" fill="none" stroke="#c2c2c2" stroke-width="1.500" opacity=".5" filter="url(#blur1)"/>
<!-- foam -->
<path d="M930 404.500 L1392 266 L1480 240 L1480 190 L930 190 Z" fill="url(#foam)"/>
<path d="M930 404.500 L1392 266 L1480 240 L1480 190 L930 190 Z" fill="#f6f6f6" filter="url(#noise)" opacity=".7"/>
<path d="M930 404.500 L1392 266 L1480 240 L1480 190 L930 190 Z" fill="#000" filter="url(#noised)" opacity=".12"/>
<path d="M930 406 L1392 267.500" fill="none" stroke="#a8a8a8" stroke-width="2.200" opacity=".75" filter="url(#blur1)"/>
<!-- block -->
<g filter="url(#blur1)">
<path d="M1237 500 Q1235.500 493 1243 489 L1296 468.500 Q1306 467 1328 478.500 L1248 513 Z" fill="#c6c6c6"/>
<path d="M1237 500 L1248 513 L1290 612 L1283 610 L1241 516 Z" fill="#a8a8a8"/>
<path d="M1253.500 510.500 L1320 481.500 Q1327.500 478.500 1331 486 L1370 572 Q1373 579.500 1366 583 L1297.500 613.500 Q1290 616.500 1286.500 609 L1248 521 Q1245.500 514 1253.500 510.500 Z" fill="#2c2c2c"/>
<path d="M1253.500 510.500 L1320 481.500 Q1327.500 478.500 1331 486 L1340 506 L1256 540 L1248 521 Q1245.500 514 1253.500 510.500 Z" fill="#3a3a3a" opacity=".5"/>
<circle cx="1262" cy="520" r="10.500" fill="#131313"/><circle cx="1322.400" cy="495" r="10.500" fill="#131313"/><circle cx="1355.600" cy="572.700" r="10.500" fill="#181818"/><circle cx="1295" cy="599" r="10.500" fill="#161616"/>
</g>
<rect x="930" y="195" width="550" height="500" fill="url(#vig2)"/>
</g>
<ellipse cx="1205" cy="443" rx="268" ry="244" fill="none" stroke="#fff" stroke-width="13" filter="url(#blur4)"/>
<!-- green marks -->
<g stroke="#6aee12" stroke-width="1.300" fill="none"><path d="M1185.8 432.2 h7.4 M1189.5 428.5 v7.4 M1242.4 431.8 h7.4 M1246.1 428.1 v7.4 M1301.5 428.8 h7.4 M1305.2 425.1 v7.4 M1188.1 491.8 h7.4 M1191.8 488.1 v7.4 M1243.8 487.9 h7.4 M1247.5 484.2 v7.4 M1300.4 487.9 h7.4 M1304.1 484.2 v7.4 M1188.1 545.2 h7.4 M1191.8 541.5 v7.4 M1244.2 544.7 h7.4 M1247.9 541.0 v7.4 M1301.0 544.5 h7.4 M1304.7 540.8 v7.4"/><path d="M1201.4 432.0 L1234.8 431.8 M1258.2 431.1 L1293.7 429.5 M1304.7 440.9 L1304.7 475.8 M1236.5 489.0 L1203.2 491.3 M1292.6 487.9 L1258.9 487.9 M1191.8 502.8 L1191.8 533.7 M1203.2 545.2 L1236.5 544.7 M1259.4 544.7 L1293.3 544.5" stroke-width="1.500"/><circle cx="1234.8" cy="431.8" r="1.300" fill="#6aee12" stroke="none"/><circle cx="1293.7" cy="429.5" r="1.300" fill="#6aee12" stroke="none"/><circle cx="1304.7" cy="475.8" r="1.300" fill="#6aee12" stroke="none"/><circle cx="1203.2" cy="491.3" r="1.300" fill="#6aee12" stroke="none"/><circle cx="1258.9" cy="487.9" r="1.300" fill="#6aee12" stroke="none"/><circle cx="1191.8" cy="533.7" r="1.300" fill="#6aee12" stroke="none"/><circle cx="1236.5" cy="544.7" r="1.300" fill="#6aee12" stroke="none"/><circle cx="1293.3" cy="544.5" r="1.300" fill="#6aee12" stroke="none"/></g>
<text x="916.800" y="219.300" font-family="'Liberation Sans','Noto Sans CJK SC',sans-serif" font-size="11.300" fill="#62fa08" letter-spacing=".12">模块状态:1,标定状态1评估标定误差状态:269496395,标定进度:9/9</text>
</g>
<path d="M912.500 207.500 h7 M916 204 v7" stroke="#1818e8" stroke-width="1.300"/>
<!-- info bar -->
<rect x="859" y="596.500" width="844.500" height="31" fill="#000" opacity=".24"/>
<!-- nav arrows -->
<path d="M882.500 402 l-12 12.500 l12 12.500 M1678 402 l12 12.500 l-12 12.500" fill="none" stroke="#a4a4a4" stroke-width="2"/>
</svg>
<div class="inf" style="left:1321px">2448 * 2048</div>
<div class="inf" style="left:1416px;color:#b0b0b0">|</div>
<div class="inf" style="left:1429.500px;color:#d6d6d6;letter-spacing:-.35px">R:255</div>
<div class="inf" style="left:1478px;letter-spacing:-.3px">G:255</div>
<div class="inf" style="left:1528px;letter-spacing:-.35px">B:255</div>
<div class="inf" style="left:1575px">|</div>
<div class="inf" style="left:1588.500px;letter-spacing:-.1px">X,0195</div>
<div class="inf" style="left:1646px;letter-spacing:-.05px">Y,0468</div>
<!-- result tabs -->
<div class="abs" style="left:857px;top:631px;width:100.500px;height:50px;background:#575b5f"></div>
<div class="abs" style="left:857px;top:679.300px;width:100.500px;height:1.700px;background:#d96c10"></div>
<div class="abs" style="left:957.500px;top:680px;width:750px;height:1px;background:#2d3033"></div>
<div class="abs" style="left:857px;top:630.500px;width:850px;height:1px;background:#303336"></div>
<div class="abs" style="left:1058.500px;top:631px;width:1px;height:49px;background:#2d3033"></div>
<div class="abs" style="left:1171px;top:631px;width:1px;height:49px;background:#2d3033"></div>
<div class="rt" style="left:872.500px;top:648px;color:#fff">当前结果</div>
<div class="rt" style="left:973px;top:648px;color:#e4e4e4">历史结果</div>
<div class="rt" style="left:1097.500px;top:648px;color:#e4e4e4">帮助</div>
<svg style="left:1676px;top:651px" width="18" height="12"><path d="M1.500 2 l7.300 7 l7.300-7" fill="none" stroke="#9a9c9e" stroke-width="2"/></svg>
<!-- table -->
<div class="abs" style="left:871.700px;top:699.700px;width:829.800px;height:217.300px;border:1px solid #2b2d30"></div>
<div class="abs" style="left:872.700px;top:747.500px;width:827.800px;height:47.500px;background:#46494d"></div>
<div class="abs" style="left:872.700px;top:746.500px;width:827.800px;height:1px;background:#2b2d30"></div>
<div class="abs" style="left:943.500px;top:701px;width:1px;height:94px;background:#2b2d30"></div>
<div class="abs" style="left:1051px;top:701px;width:1px;height:94px;background:#2b2d30"></div>
<div class="abs" style="left:1158.500px;top:701px;width:1px;height:94px;background:#2b2d30"></div>
<div class="abs" style="left:1336px;top:701px;width:1px;height:94px;background:#2b2d30"></div>
<div class="th" style="left:873.500px;width:70px">序号</div>
<div class="th" style="left:944.500px;width:106.500px">模块状态</div>
<div class="th" style="left:1052px;width:106.500px">标定状态</div>
<div class="th" style="left:1159.500px;width:176.500px">评估标定误差状态</div>
<div class="td" style="left:873.500px;width:70px">0</div>
<div class="td" style="left:944.500px;width:106.500px">1</div>
<div class="td" style="left:1052px;width:106.500px">1</div>
<div class="td" style="left:1159.500px;width:176.500px">269496395</div>
<!-- right status -->
<div class="abs" style="left:857px;top:923px;width:850px;height:1px;background:#2d3033"></div>
<svg style="left:870px;top:932px" width="24" height="18"><path d="M11.500 2 l9.500 14.500 h-19z" fill="#1fd41f" stroke="#1fd41f" stroke-width="1.500" stroke-linejoin="round"/><path d="M11.500 7 v5.500 M11.500 14 v1.500" stroke="#fff" stroke-width="1.600"/></svg>
<div class="t" style="left:914.500px;top:933.800px;font-size:15px;color:#e2e2e2;letter-spacing:.15px">17:28:39</div>
<div class="t" style="left:983px;top:933.800px;font-size:15.300px;color:#e2e2e2">执行一次</div>
<div class="t" style="left:1526.500px;top:934.500px;font-size:13.500px;color:#d8d8d8;letter-spacing:-.15px">V4.4.0 Build20250516</div>
<svg style="left:1673px;top:934px" width="20" height="17" fill="#8e9092"><rect x="1.250" y="2.400" width="17.500" height="1.500"/><rect x="1.250" y="5.700" width="17.500" height="1.500"/><rect x="9.200" y="9.900" width="9.550" height="1.600"/><rect x="9.200" y="13.600" width="9.550" height="1.600"/><path d="M1.250 15 l2.750-4.600 l2.750 4.600z"/></svg>
<!--RIGHT-END-->
<style>
#dlg{position:absolute;left:312.500px;top:168px;width:522px;height:623.500px;background:#f2f3f5;box-shadow:0 0 0 1px rgba(20,20,20,.55),1px 2px 5px rgba(0,0,0,.5);overflow:hidden}
#dlg .lb{position:absolute;left:40.500px;font-size:17.700px;line-height:1;color:#595959;white-space:nowrap}
#dlg .ip{position:absolute;left:152.500px;width:329px;border:1px solid #c9c7c5;border-radius:4px}
#dlg .iv{position:absolute;font-size:17.500px;line-height:1;color:#7a7a7a;white-space:nowrap}
#dlg .btn{position:absolute;top:589px;height:30px;background:#e3e1e0;border:1px solid #b9b7b5;border-radius:3px;font-size:15.300px;color:#595959;text-align:center;line-height:28px;white-space:nowrap}
</style>
<div id="dlg">
 <div class="abs" style="left:0;top:0;width:100%;height:3px;background:#e8423e"></div>
 <div class="abs" style="left:0;top:3px;width:100%;height:39px;background:#252525"></div>
 <div class="t" style="left:12px;top:15.500px;font-size:16px;font-weight:700;color:#fff"><span style="letter-spacing:1.300px">3 N</span>点标定</div>
 <svg style="left:108px;top:12.500px" width="20" height="20" viewBox="0 0 20 20"><circle cx="10" cy="10" r="8" fill="none" stroke="#e07408" stroke-width="1.400"/><path d="M7.300 8 a2.700 2.700 0 1 1 4 2.400 q-1.300 .8-1.300 2.300" fill="none" stroke="#e07408" stroke-width="1.400"/><circle cx="10" cy="14.800" r=".9" fill="#e07408"/></svg>
 <svg style="left:484px;top:15px" width="15" height="15"><path d="M1.500 1.500 l12.500 12.500 M14 1.500 l-12.500 12.500" stroke="#e4e2e0" stroke-width="2.700"/></svg>
 <!-- tabs -->
 <div class="abs" style="left:0;top:42px;width:100%;height:46px;background:#fff"></div>
 <div class="abs" style="left:0;top:88px;width:100%;height:1.500px;background:#d9d7d6"></div>
 <div class="abs" style="left:4.500px;top:44px;width:95px;height:44px;background:#fdebdf"></div>
 <div class="abs" style="left:4.500px;top:84.500px;width:95px;height:3.500px;background:#e86d0c"></div>
 <div class="t" style="left:22.500px;top:58.500px;font-size:15px;color:#2e2e2e;font-weight:500">基本参数</div>
 <div class="t" style="left:117px;top:58.500px;font-size:15px;color:#5c5c5c">运行参数</div>
 <div class="t" style="left:212px;top:58.500px;font-size:15px;color:#5c5c5c">结果显示</div>
 <!-- scrollbar -->
 <div class="abs" style="left:508px;top:98px;width:11.500px;height:239px;background:#e2e0de;border:1px solid #c9c7c5;border-radius:3px"></div>
 <!-- section -->
 <div class="t" style="left:39.500px;top:121px;font-size:17.500px;font-weight:700;color:#363636">标定参数</div>
 <div class="lb" style="top:165px">标定点获取</div>
 <div class="ip" style="top:153px;height:38px;background:#fff"></div>
 <div class="iv" style="left:166px;top:165px;color:#5c5c5c">触发获取</div>
 <svg style="left:467px;top:176.500px" width="11" height="11"><path d="M10.500 .5 v10 h-10z" fill="#dcbca8"/></svg>
 <div class="lb" style="top:208.5px">标定点输入</div>
 <svg style="left:157px;top:203px" width="100" height="26" viewBox="0 0 100 26"><circle cx="12.600" cy="12.500" r="9.700" fill="#fdf0e8" stroke="#f0700c" stroke-width="2.200"/><circle cx="12.600" cy="12.500" r="3.600" fill="#f06a00"/><circle cx="84" cy="12.500" r="9.700" fill="#f6f6f6" stroke="#bdbbb9" stroke-width="1.800"/></svg>
 <div class="iv" style="left:188.500px;top:208.5px;color:#5c5c5c">按点</div>
 <div class="iv" style="left:260px;top:208.5px;color:#5c5c5c">按坐标</div>
 <div class="lb" style="top:252px">图像点</div>
 <div class="ip" style="top:238.8px;height:39.500px;border-radius:6px"></div>
 <div class="iv" style="left:167.500px;top:252px">2 高精度匹配1.匹配框中心[]</div>
 <div class="lb" style="top:295.5px">物理点</div>
 <div class="ip" style="top:282.8px;height:39.500px;border-radius:6px"></div>
 <div class="lb" style="top:339.5px">图像角度</div>
 <div class="ip" style="top:326.8px;height:39.500px;border-radius:6px"></div>
 <div class="lb" style="top:383.5px">物理角度</div>
 <div class="ip" style="top:370.8px;height:39.500px;border-radius:6px"></div>
 <svg style="left:450px;top:248px" width="22" height="160" viewBox="0 0 22 160" fill="none" stroke="#dcbca8" stroke-width="2.700" stroke-linecap="round">
 <g id="lnk" transform="scale(.9)"><path d="M10 13a5 5 0 0 0 7.540.540l3-3a5 5 0 0 0-7.070-7.070l-1.720 1.710"/><path d="M14 11a5 5 0 0 0-7.540-.540l-3 3a5 5 0 0 0 7.070 7.070l1.710-1.710"/></g>
 <use href="#lnk" y="44"/><use href="#lnk" y="88"/><use href="#lnk" y="132"/>
 </svg>
 <div class="lb" style="top:427px">平移次数</div>
 <div class="ip" style="top:417px;height:35px;background:#fcfcfc"></div>
 <div class="iv" style="left:165px;top:427.5px;color:#6a6a6a">9</div>
 <div class="lb" style="top:471px">旋转次数</div>
 <div class="ip" style="top:461px;height:35px;width:284px;background:#fcfcfc"></div>
 <div class="iv" style="left:165px;top:471.5px;color:#6a6a6a">0</div>
 <div class="abs" style="left:443.500px;top:461px;width:38px;height:36px;background:#f0f0f0;border:1px solid #c9c7c5;border-radius:3px"></div>
 <svg style="left:450px;top:467px" width="26" height="24" viewBox="0 0 26 24"><path d="M16.500 3 l4.500 4.500 l-11 11 l-6.500 2 l2-6.500z" fill="#9e9e9e"/><path d="M14 5.500 l4.500 4.500" stroke="#f0f0f0" stroke-width="1"/><path d="M3 22 h20" stroke="#b4b4b4" stroke-width="1.300"/></svg>
 <svg style="left:416px;top:424px" width="60" height="70" viewBox="0 0 60 70" fill="#d4ac94"><path d="M46.500 8.500 l4-6 l4 6z M46.500 12.500 l4 6 l4-6z M1.500 52.500 l4-6 l4 6z M1.500 56.500 l4 6 l4-6z"/></svg>
 <div class="lb" style="top:515px">示教</div>
 <div class="abs" style="left:157.500px;top:509px;width:50px;height:25.500px;border:1px solid #aeaeae;border-radius:4px;background:linear-gradient(#bdbdbd,#d0d0d0)"></div>
 <div class="abs" style="left:157px;top:508.500px;width:22px;height:27px;border:1px solid #b4b4b4;border-radius:4px;background:linear-gradient(#fbfbfb,#e9e9e9);box-shadow:0 1px 1px rgba(0,0,0,.15)"></div>
 <div class="abs" style="left:39.500px;top:549.500px;width:460px;height:1.500px;background:#d7d6d5"></div>
 <div class="t" style="left:39.500px;top:578.500px;font-size:17.500px;font-weight:700;color:#363636">物理坐标系参数</div>
 <!-- footer -->
 <div class="abs" style="left:0;top:583.500px;width:100%;height:40px;background:#e6e6e6"></div>
 <div class="btn" style="left:232px;width:82.500px">清空标定点</div>
 <div class="btn" style="left:320.500px;width:92.500px;letter-spacing:-.3px">生成标定文件</div>
 <div class="btn" style="left:419.500px;width:82px">执行</div>
</div>
<!-- red arrow -->
<svg style="left:650px;top:780px" width="40" height="140" viewBox="650 780 40 140"><path d="M671 786.500 L682 819.700 L673.400 817.500 L663.700 912.800 L665 816.500 L656 818.400 Z" fill="#fa5252"/></svg>
<!--DIALOG-END-->
<div class="abs" style="left:68px;top:103px;width:1639px;height:3px;background:linear-gradient(rgba(20,20,20,.55),rgba(20,20,20,0))"></div>
<div class="abs" style="left:0;top:958.400px;width:1708px;height:1.600px;background:#3a3a3b"></div>
<div class="abs" style="left:0;top:4px;width:1.700px;height:956px;background:#454545"></div>
</body>
</html>
